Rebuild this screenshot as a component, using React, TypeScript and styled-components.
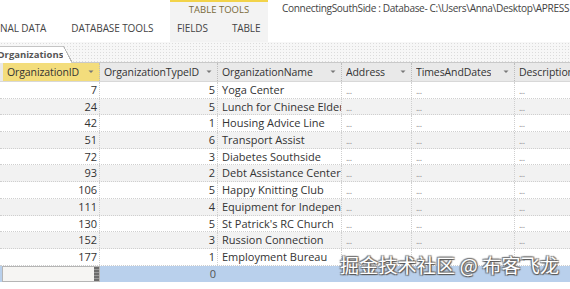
import styled, { createGlobalStyle } from "styled-components";

const GlobalStyle = createGlobalStyle`
  html, body {
    margin: 0;
    padding: 0;
    background: #ffffff;
  }
  body {
    font-family: "Open Sans", "Noto Sans", sans-serif;
    overflow: hidden;
  }
`;

interface Organization {
  id: number;
  typeId: number;
  name: string;
}

const organizations: Organization[] = [
  { id: 7, typeId: 5, name: "Yoga Center" },
  { id: 24, typeId: 5, name: "Lunch for Chinese Elderly" },
  { id: 42, typeId: 1, name: "Housing Advice Line" },
  { id: 51, typeId: 6, name: "Transport Assist" },
  { id: 72, typeId: 3, name: "Diabetes Southside" },
  { id: 93, typeId: 2, name: "Debt Assistance Center" },
  { id: 106, typeId: 5, name: "Happy Knitting Club" },
  { id: 111, typeId: 4, name: "Equipment for Independence" },
  { id: 130, typeId: 5, name: "St Patrick's RC Church" },
  { id: 152, typeId: 3, name: "Russion Connection" },
  { id: 177, typeId: 1, name: "Employment Bureau" },
];

const columns = ["OrganizationID", "OrganizationTypeID", "OrganizationName", "Address", "TimesAndDates", "Description"];

const COLS = "100px 118px 124px 70px 103px 110px";

const DropArrow = () => (
  <svg width="6" height="4" viewBox="0 0 6 4">
    <path d="M0.5 0.5 L3 3 L5.5 0.5 Z" fill="#777" />
  </svg>
);

const App = () => {
  return (
    <Page>
      <GlobalStyle />
      <Ribbon>
        <TabGroup>
          <RibbonTab>NAL DATA</RibbonTab>
          <RibbonTab>DATABASE TOOLS</RibbonTab>
        </TabGroup>
        <ContextGroup>
          <ContextLabel>TABLE TOOLS</ContextLabel>
          <ContextTabs>
            <RibbonTab>FIELDS</RibbonTab>
            <RibbonTab>TABLE</RibbonTab>
          </ContextTabs>
        </ContextGroup>
        <WindowTitle>ConnectingSouthSide : Database- C:\Users\Anna\Desktop\APRESS</WindowTitle>
      </Ribbon>

      <DocTabs>
        <DocTab>Organizations</DocTab>
      </DocTabs>

      <Sheet>
        <HeaderRow>
          {columns.map((col, i) => (
            <HeaderCell key={col} $active={i === 0}>
              <span>{col}</span>
              <DropArrow />
            </HeaderCell>
          ))}
        </HeaderRow>
        {organizations.map((org, i) => (
          <Row key={org.id} $alt={i % 2 === 1}>
            <Cell $align="right">{org.id}</Cell>
            <Cell $align="right">{org.typeId}</Cell>
            <NameCell>{org.name}</NameCell>
            <Cell><Memo>...</Memo></Cell>
            <Cell><Memo>...</Memo></Cell>
            <Cell><Memo>...</Memo></Cell>
          </Row>
        ))}
        <NewRow>
          <NewCell>
            <Caret />
          </NewCell>
          <BlueCell $align="right">0</BlueCell>
          <BlueCell />
          <BlueCell />
          <BlueCell />
          <BlueCell />
        </NewRow>
        <Watermark>掘金技术社区 @ 布客飞龙</Watermark>
      </Sheet>
    </Page>
  );
};

export default App;

const Page = styled.div`
  width: 570px;
  height: 289px;
  overflow: hidden;
  background: #ffffff;
`;

const Ribbon = styled.div`
  display: flex;
  height: 42px;
  background: #ffffff;
`;

const TabGroup = styled.div`
  display: flex;
  flex-shrink: 0;
  align-items: flex-end;
  gap: 25px;
  width: 170px;
  padding-bottom: 7px;
  box-sizing: border-box;
`;

const RibbonTab = styled.span`
  font-size: 10px;
  color: #444444;
  white-space: nowrap;
  letter-spacing: -0.1px;
`;

const ContextGroup = styled.div`
  display: flex;
  flex-shrink: 0;
  flex-direction: column;
  width: 98px;
  background: #f3f3f3;
  border-top: 2px solid #f2d34a;
  box-sizing: border-box;
`;

const ContextLabel = styled.div`
  font-size: 9.5px;
  color: #7a6a3a;
  text-align: center;
  padding-top: 1px;
  height: 19px;
  white-space: nowrap;
  box-sizing: border-box;
`;

const ContextTabs = styled.div`
  display: flex;
  gap: 24px;
  padding-left: 7px;
`;

const WindowTitle = styled.div`
  font-size: 10.1px;
  color: #444444;
  padding: 1px 0 0 14px;
  white-space: nowrap;
  letter-spacing: -0.35px;
`;

const DocTabs = styled.div`
  height: 21px;
  display: flex;
  align-items: flex-end;
  background-color: #f7f7f7;
  background-image: radial-gradient(#dcdcdc 0.6px, transparent 0.7px);
  background-size: 3px 3px;
  border-bottom: 1px solid #c9c9c9;
  box-sizing: border-box;
`;

const DocTab = styled.div`
  position: relative;
  height: 17px;
  width: 64px;
  margin-bottom: -1px;
  background: #ffffff;
  border-top: 1px solid #c4c4c4;
  font-size: 9.5px;
  font-weight: 700;
  color: #555555;
  line-height: 16px;
  white-space: nowrap;
  box-sizing: border-box;
  text-indent: -3px;
  &::after {
    content: "";
    position: absolute;
    right: -8px;
    top: -1px;
    width: 9px;
    height: 17px;
    background: linear-gradient(to top right, #ffffff 48%, #b8b8b8 49%, #b8b8b8 55%, transparent 56%);
  }
`;

const Sheet = styled.div`
  position: relative;
`;

const HeaderRow = styled.div`
  display: grid;
  grid-template-columns: ${COLS};
  height: 19px;
  background: #e9e9e9;
  border-bottom: 1px solid #d8d8d8;
  box-sizing: border-box;
`;

const HeaderCell = styled.div<{ $active?: boolean }>`
  display: flex;
  align-items: center;
  justify-content: space-between;
  gap: 4px;
  padding: 0 5px 0 ${(p) => (p.$active ? "7px" : "4px")};
  font-size: 10.5px;
  letter-spacing: -0.1px;
  color: #333333;
  white-space: nowrap;
  overflow: hidden;
  border-right: 1px dotted #bdbdbd;
  background: ${(p) => (p.$active ? "#f3dd7c" : "transparent")};
  box-shadow: ${(p) => (p.$active ? "inset 3px 0 0 #e9e9e9" : "none")};
  span {
    overflow: hidden;
  }
  svg {
    flex-shrink: 0;
  }
`;

const Row = styled.div<{ $alt?: boolean }>`
  display: grid;
  grid-template-columns: ${COLS};
  height: 16.7px;
  background: ${(p) => (p.$alt ? "#f2f2f2" : "#ffffff")};
  border-bottom: 1px dotted #cfcfcf;
  box-sizing: border-box;
`;

const Cell = styled.div<{ $align?: "left" | "right" }>`
  font-size: 11px;
  color: #333333;
  line-height: 15px;
  padding: 0 2px 0 4px;
  text-align: ${(p) => p.$align ?? "left"};
  white-space: nowrap;
  overflow: hidden;
  border-right: 1px dotted #cfcfcf;
`;

const NameCell = styled(Cell)`
  text-overflow: clip;
`;

const Memo = styled.span`
  font-size: 9px;
  color: #8a8a8a;
  letter-spacing: -0.5px;
`;

const NewRow = styled.div`
  display: grid;
  grid-template-columns: ${COLS};
  height: 16.7px;
  background: #b9d0ec;
`;

const NewCell = styled.div`
  display: flex;
  justify-content: flex-end;
  background: #f6f5f3;
  border: 1px solid #b5b5b5;
  margin-left: 2px;
  box-sizing: border-box;
`;

const Caret = styled.div`
  width: 5px;
  height: 100%;
  background: repeating-linear-gradient(#6d6d6d 0 2px, #9a9a9a 2px 3px);
`;

const BlueCell = styled(Cell)`
  border-right: none;
  color: #555555;
`;

const Watermark = styled.div`
  position: absolute;
  left: 340px;
  bottom: 4px;
  font-family: "Noto Sans CJK SC", sans-serif;
  font-size: 19px;
  letter-spacing: 0.2px;
  white-space: nowrap;
  color: #ffffff;
  text-shadow: 1px 1px 1px #555, -1px -1px 1px #777, 1px -1px 1px #777, -1px 1px 1px #777;
`;
